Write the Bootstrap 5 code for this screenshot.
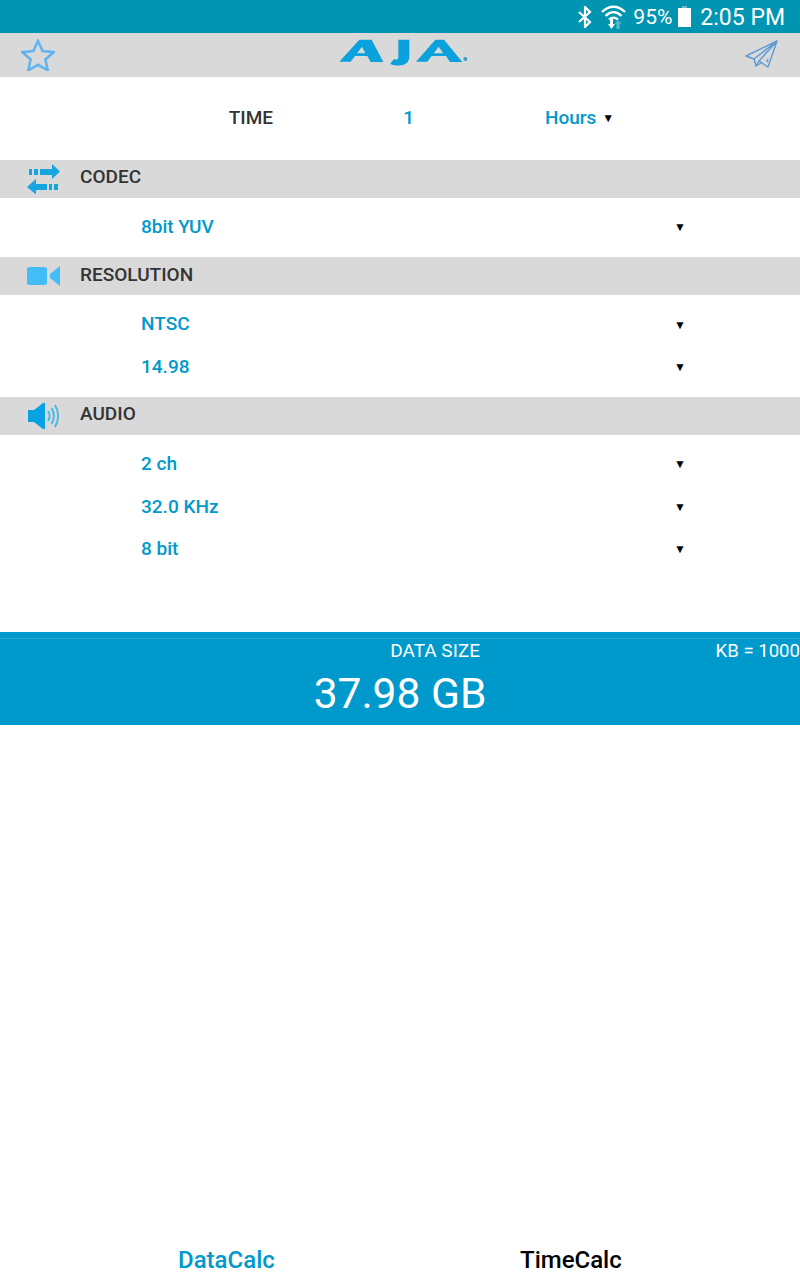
<!DOCTYPE html>
<html lang="en">
<head>
    <meta charset="UTF-8">
    <meta name="viewport" content="width=device-width, initial-scale=1.0">
    <title>AJA DataCalc</title>
    <link href="https://cdn.jsdelivr.net/npm/bootstrap@5.3.0/dist/css/bootstrap.min.css" rel="stylesheet">
    <style>
        body { font-family: Roboto, sans-serif; background: #fff; height: 1280px; overflow: hidden; }
        .status-strip { height: 33px; background: #0195b2; color: #fff; font-size: 21px; padding-right: 15px; }
        .status-text { padding-top: 3px; }
        .status-clock { font-size: 23px; margin-left: 9px; padding-top: 3px; }
        .top-strip { height: 44px; background: #d9d9d9; padding: 0 21px; }
        .aja-logo { position: absolute; left: 330px; top: -3px; }
        .time-row { height: 83px; font-size: 19px; font-weight: 500; }
        .time-label { width: 273px; text-align: right; color: #333; }
        .time-value { width: 141px; text-align: right; color: #0099cc; }
        .time-unit { margin-left: 131px; color: #0099cc; }
        .caret-mark { color: #000; font-size: 12px; margin-left: 6px; position: relative; top: -2px; }
        .section-head { height: 38px; background: #d9d9d9; color: #333; font-size: 19px; font-weight: 500; }
        .head-icon { width: 80px; padding-left: 26px; line-height: 0; }
        .head-title { margin-bottom: 3px; }
        .pick-rows { padding-top: 8px; padding-bottom: 8.800px; }
        .pick-row { height: 42.500px; padding-left: 141px; padding-right: 114px; font-size: 19px; font-weight: 500; color: #0099cc; }
        .pick-row .caret-mark { margin-left: 0; top: 0; }
        .result-box { margin-top: 52.600px; height: 93px; background: #0099cc; color: #fff; border-top: 6px solid #0099cc; }
        .size-label { height: 25px; font-size: 19px; line-height: 24px; border-top: 1px solid #2ba9d3; }
        .size-title { width: 480px; text-align: right; }
        .size-unit { margin-left: auto; font-size: 18.600px; }
        .size-value { font-size: 42.500px; line-height: 62px; text-align: center; }
        .bottom-tabs { position: absolute; left: 0; right: 0; top: 1242px; height: 38px; font-size: 24px; font-weight: 500; }
        .tab-data { position: absolute; left: 178px; color: #0099cc; }
        .tab-time { position: absolute; left: 520px; color: #000; }
    </style>
</head>
<body class="position-relative">
    <div class="status-strip d-flex align-items-center justify-content-end">
        <svg width="16" height="22" viewBox="0 0 16 22" class="me-2"><path d="M2 6l11 10-5 5V1l5 5L2 16" fill="none" stroke="#fff" stroke-width="2.200"/></svg>
        <svg width="25" height="26" viewBox="0 0 25 26" style="margin-right:7px"><g fill="none" stroke="#fff" stroke-width="2.400"><path d="M1 8c7-7 16-7 23 0"/><path d="M4.500 12c5-5 11-5 16 0"/><path d="M8 15.500c3-2.500 6-2.500 9 0"/></g><path d="M9 15h3v5h2l-3.500 5-3.500-5h2z" fill="#fff"/><path d="M17 16l3.500 4h-2v5h-3v-5h-2z" fill="#5fb6c9"/></svg>
        <span class="status-text">95%</span>
        <svg width="13" height="22" viewBox="0 0 13 22" style="margin-left:6px"><path d="M4 0h5v2H4z" fill="#6dbccb"/><path d="M0 2h13v19H0z" fill="#fff"/></svg>
        <span class="status-clock">2:05 PM</span>
    </div>
    <div class="top-strip d-flex align-items-center justify-content-between position-relative">
        <svg width="34" height="32" viewBox="0 0 34 32"><path d="M17 2l4.600 10 11 1.200-8.200 7.300 2.300 10.800L17 25.800l-9.700 5.500 2.300-10.800L1.400 13.200l11-1.200z" fill="none" stroke="#63b3f0" stroke-width="2.600"/></svg>
        <svg class="aja-logo" width="150" height="45" viewBox="0 0 450 135"><g fill="#0ba1dd"><path d="M28 95L88 29h37l35 67h-38l-10-18H72l8-8h26L96 50 62 95z"/><path d="M203 29h35v50c0 26-26 34-58 23l12-15c12 5 13-1 13-9V29z"/><path d="M258 95l58-66h26l55 67h-37l-12-18h-46l8-8h30l-14-20-34 45z"/></g><circle cx="406" cy="87" r="6" fill="#3d9cc4"/></svg>
        <svg width="34" height="32" viewBox="0 0 34 32"><g fill="none" stroke="#5b9bd5" stroke-width="1.400" stroke-linejoin="round"><path d="M32 2L1 17l8 3L32 2l-9 26-9-6z"/><path d="M9 20l2 7 3-5"/><path d="M11 27l5-3"/><path d="M23 20l-1 3"/></g></svg>
    </div>
    <div class="time-row d-flex align-items-center">
        <span class="time-label">TIME</span>
        <span class="time-value">1</span>
        <span class="time-unit">Hours<span class="caret-mark">▼</span></span>
    </div>
    <div class="section-head d-flex align-items-center">
        <span class="head-icon"><svg width="34" height="31" viewBox="0 0 34 31"><g fill="#16a5e0"><path d="M3 5h3v6H3zM8 5h4v6H8zM14 5h12V0l8 7.500-8 7.500v-4H14z"/><path d="M23 20h3v6h-3zM28 20h4v6h-4zM21 20H10v-5l-9 8 9 7.500V26h11z"/></g></svg></span>
        <span class="head-title">CODEC</span>
    </div>
    <div class="pick-rows">
        <div class="pick-row d-flex align-items-center justify-content-between"><span>8bit YUV</span><span class="caret-mark">▼</span></div>
    </div>
    <div class="section-head d-flex align-items-center">
        <span class="head-icon"><svg width="34" height="20" viewBox="0 0 34 20"><path d="M4 1h14c2 0 3 1 3 2v14c0 1-1 2-3 2H4c-2 0-3-1-3-2V3c0-1 1-2 3-2z" fill="#44bdf7"/><path d="M34 0v20l-10-8V8z" fill="#44bdf7"/></svg></span>
        <span class="head-title">RESOLUTION</span>
    </div>
    <div class="pick-rows">
        <div class="pick-row d-flex align-items-center justify-content-between"><span>NTSC</span><span class="caret-mark">▼</span></div>
        <div class="pick-row d-flex align-items-center justify-content-between"><span>14.98</span><span class="caret-mark">▼</span></div>
    </div>
    <div class="section-head d-flex align-items-center">
        <span class="head-icon"><svg width="34" height="26" viewBox="0 0 34 26"><path d="M2 7h6l9-7h2v26h-2l-9-7H2z" fill="#07a2e3"/><g fill="none" stroke="#3bb8ee" stroke-width="1.800"><path d="M22 8c2 3 2 7 0 10"/><path d="M25.500 5c3 5 3 11 0 16"/><path d="M29 2c4 7 4 15 0 22"/></g></svg></span>
        <span class="head-title">AUDIO</span>
    </div>
    <div class="pick-rows">
        <div class="pick-row d-flex align-items-center justify-content-between"><span>2 ch</span><span class="caret-mark">▼</span></div>
        <div class="pick-row d-flex align-items-center justify-content-between"><span>32.0 KHz</span><span class="caret-mark">▼</span></div>
        <div class="pick-row d-flex align-items-center justify-content-between"><span>8 bit</span><span class="caret-mark">▼</span></div>
    </div>
    <div class="result-box">
        <div class="size-label d-flex"><span class="size-title">DATA SIZE</span><span class="size-unit">KB = 1000</span></div>
        <div class="size-value">37.98 GB</div>
    </div>
    <div class="bottom-tabs">
        <span class="tab-data">DataCalc</span>
        <span class="tab-time">TimeCalc</span>
    </div>
    <script src="https://cdn.jsdelivr.net/npm/bootstrap@5.3.0/dist/js/bootstrap.bundle.min.js"></script>
</body>
</html>
